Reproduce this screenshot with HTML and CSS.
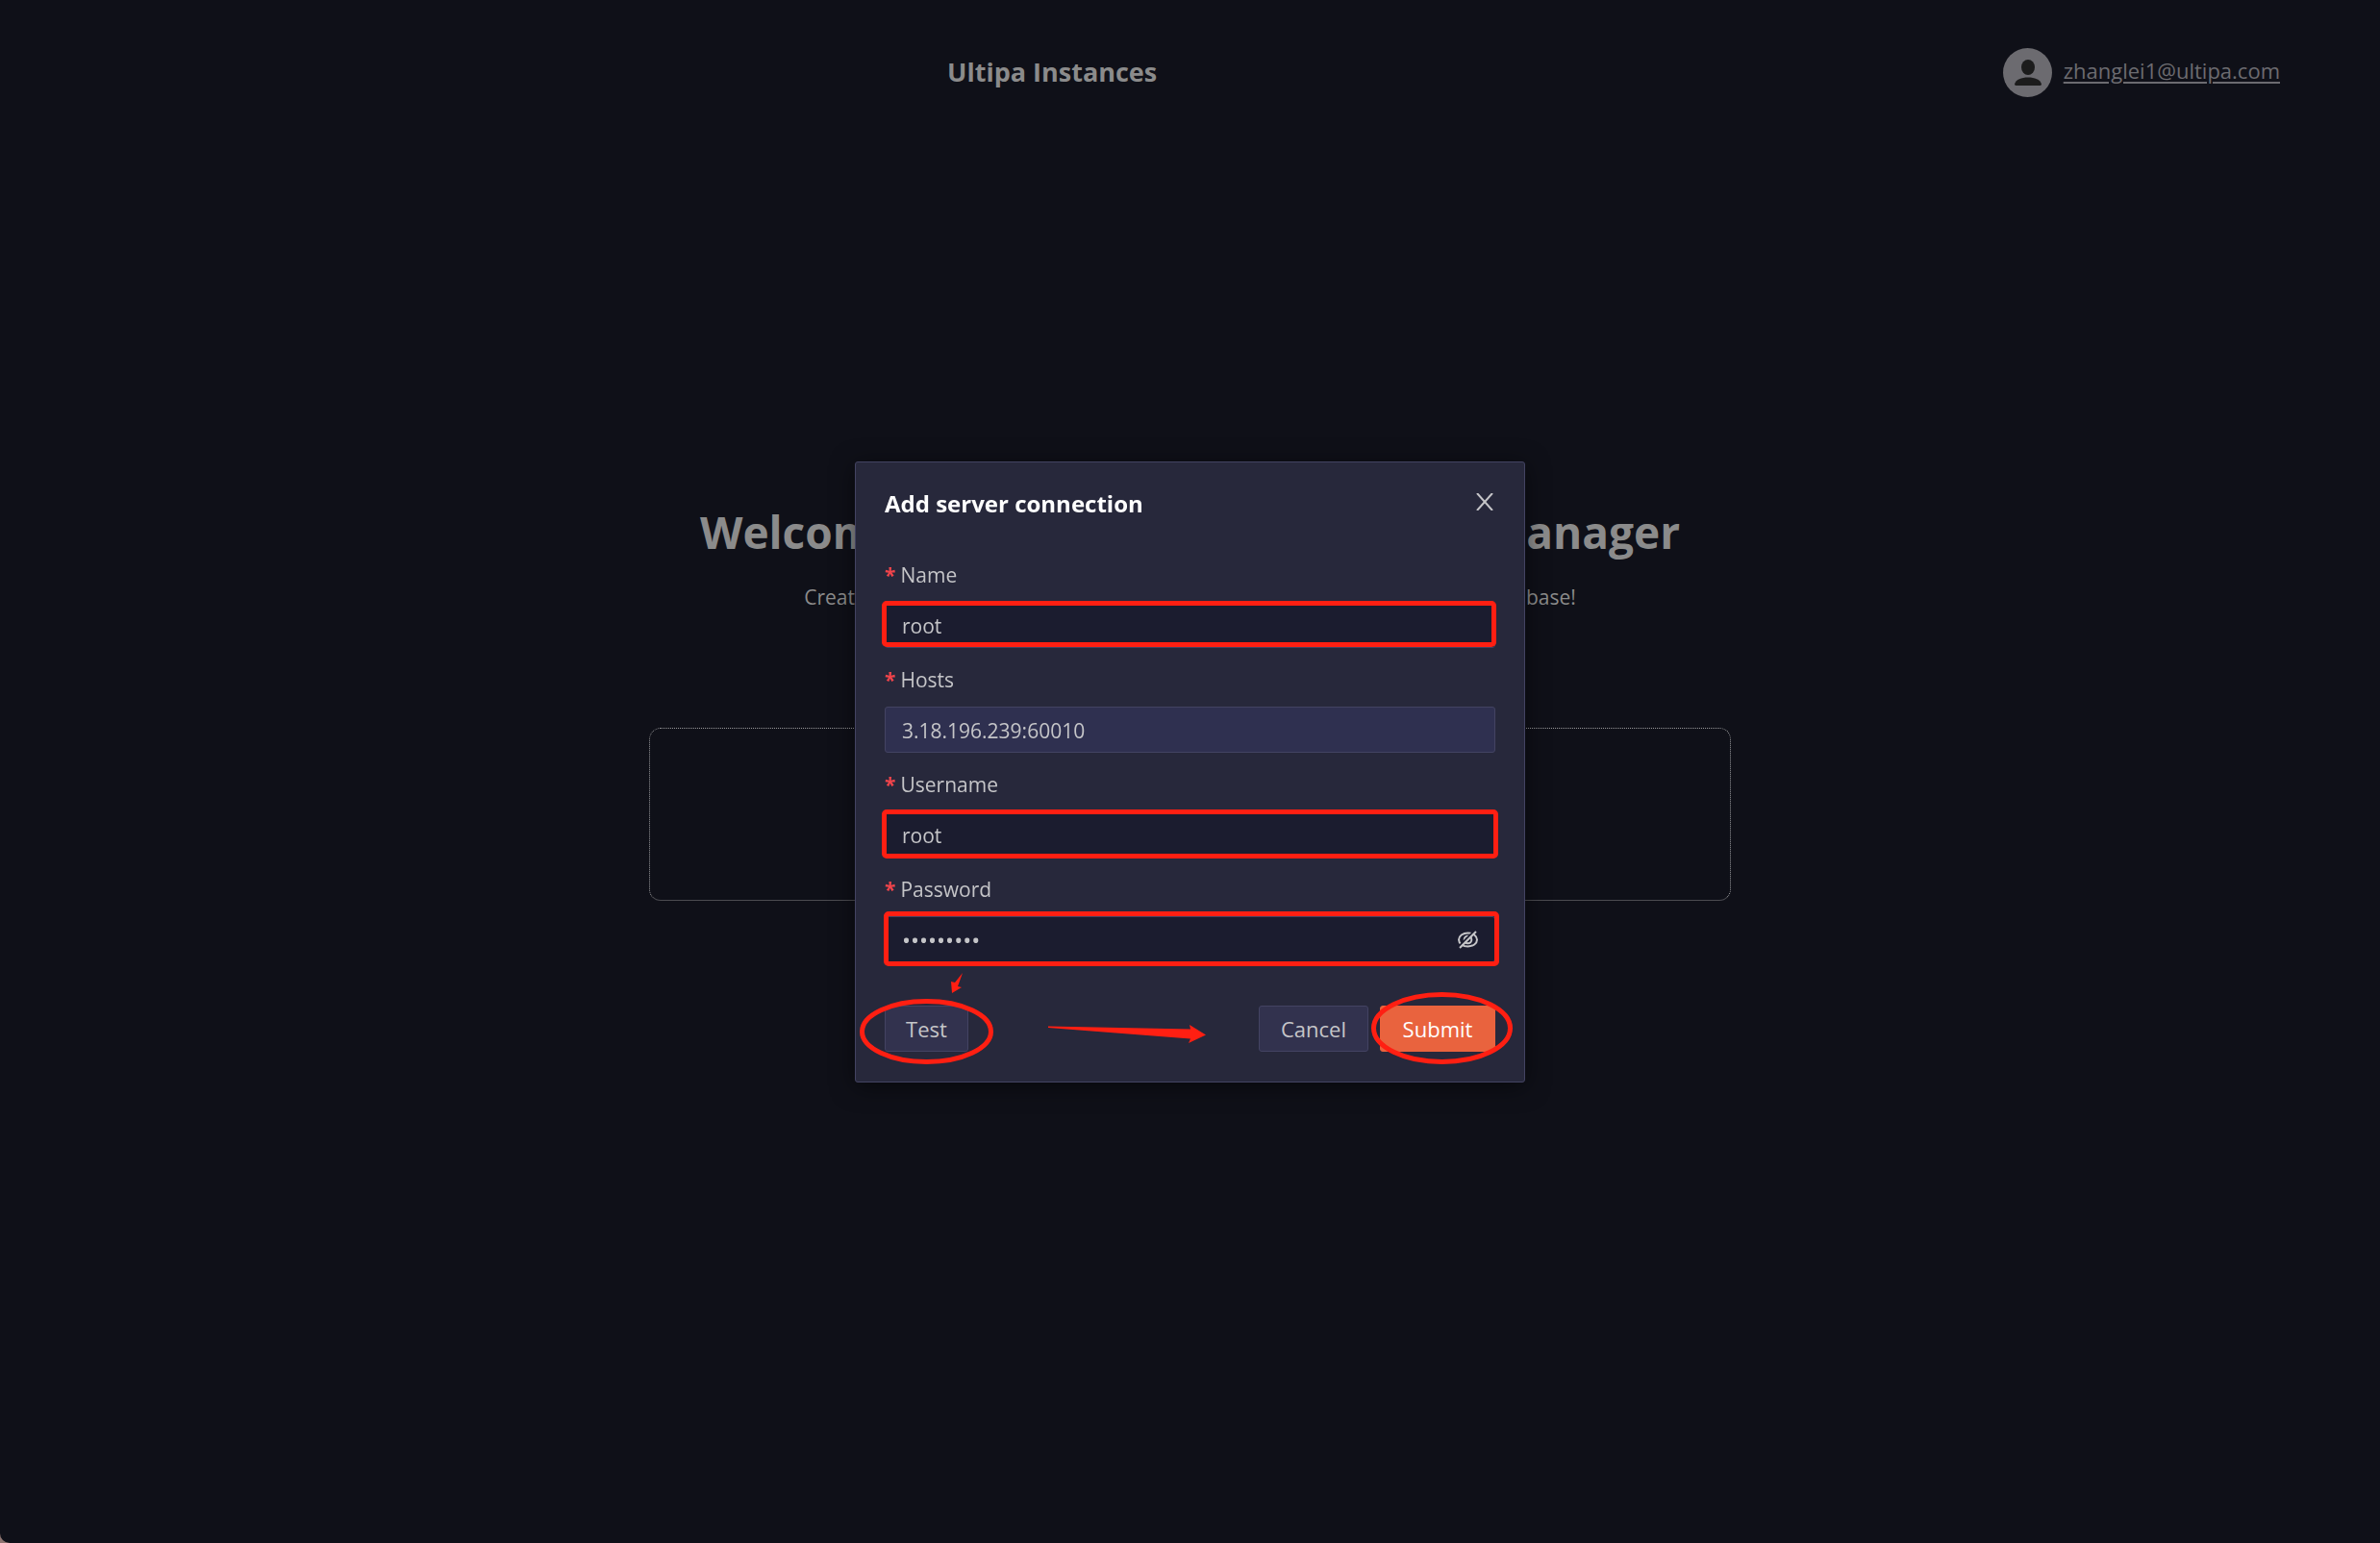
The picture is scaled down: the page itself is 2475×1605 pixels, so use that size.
FILE: index.html
```html
<!DOCTYPE html>
<html lang="en">
<head>
    <meta charset="UTF-8">
    <meta name="viewport" content="width=device-width, initial-scale=1.0">
    <title>Ultipa Instances</title>
    <link rel="stylesheet" href="styles.css">
</head>
<body>
    <div class="page">
        <header class="header">
            <h1>Ultipa Instances</h1>
            <div class="user">
                <svg class="avatar" viewBox="0 0 51 51" aria-hidden="true">
                    <circle cx="25.5" cy="25.5" r="25.5" fill="#6c6b70"/>
                    <ellipse cx="26" cy="20" rx="7" ry="8" fill="#1c1c1c"/>
                    <path d="M12 37.500C13.500 32.500 19 30.500 26 30.500S38.500 32.500 40 37.500Q40 39 37 39H15Q12 39 12 37.500Z" fill="#1c1c1c"/>
                </svg>
                <a href="#">zhanglei1@ultipa.com</a>
            </div>
        </header>

        <main class="welcome">
            <h2>Welcome to Ultipa Graph Database Manager</h2>
            <p>Create or add a server connection and then start using the Ultipa Graph database!</p>
            <div class="drop-box"></div>
        </main>
    </div>

    <div class="overlay">
        <form class="modal" role="dialog" aria-labelledby="modal-title">
            <div class="modal-header">
                <h3 id="modal-title">Add server connection</h3>
                <button type="button" class="close-button" aria-label="Close">
                    <svg viewBox="0 0 18 18"><path d="M1 0L17 18M17 0L1 18"/></svg>
                </button>
            </div>

            <div class="form-group">
                <label for="name">Name</label>
                <div class="field">
                    <input type="text" id="name" value="root">
                    <span class="mark mark-name"></span>
                </div>
            </div>
            <div class="form-group">
                <label for="hosts">Hosts</label>
                <div class="field">
                    <input type="text" id="hosts" class="filled" value="3.18.196.239:60010">
                </div>
            </div>
            <div class="form-group">
                <label for="username">Username</label>
                <div class="field">
                    <input type="text" id="username" value="root">
                    <span class="mark mark-username"></span>
                </div>
            </div>
            <div class="form-group">
                <label for="password">Password</label>
                <div class="field">
                    <input type="password" id="password" value="ultipa123">
                    <button type="button" class="eye-button" aria-label="Show password">
                        <svg viewBox="0 0 21 19">
                            <ellipse cx="10.500" cy="9.500" rx="9.500" ry="7"/>
                            <circle cx="10.500" cy="9.500" r="3.800"/>
                            <path class="gap" d="M1 16.500L18 -0.500"/>
                            <path d="M2 18L19 1"/>
                        </svg>
                    </button>
                    <span class="mark mark-password"></span>
                </div>
            </div>

            <div class="modal-footer">
                <button type="button" class="test">Test</button>
                <button type="button" class="cancel">Cancel</button>
                <button type="submit" class="primary">Submit</button>

                <!-- steps: test first, then submit -->
                <svg class="steps" viewBox="0 0 696 120" aria-hidden="true">
                    <ellipse cx="73.500" cy="67" rx="67" ry="31.500"/>
                    <ellipse cx="609.500" cy="63.500" rx="71" ry="35"/>
                    <path d="M111 6L103 16L99 15L100 27L110 21L106 20Z"/>
                    <path d="M200 61.500L348 64.500L347 60L364 70.500L346 79L348 74.500L200 63Z"/>
                </svg>
            </div>
        </form>
    </div>
</body>
</html>
```

FILE: styles.css
```css
* {
    margin: 0;
    padding: 0;
    box-sizing: border-box;
}

html {
    background: #8d7470;
}

body {
    font-family: 'Open Sans', 'Noto Sans', sans-serif;
    font-size: 21px;
    line-height: 32px;
    background: #0f1018;
    color: #8b8b8b;
    min-height: 100vh;
    border-bottom-left-radius: 10px;
}

.header {
    display: flex;
    justify-content: space-between;
    align-items: center;
    height: 150px;
    padding-left: 39.8%;
    padding-right: 104px;
}

h1 {
    font-size: 27px;
    line-height: 40px;
}

.user {
    display: flex;
    align-items: center;
    gap: 12px;
}

.avatar {
    width: 51px;
    height: 51px;
}

.user a {
    padding-bottom: 4px;
    color: #6c6b70;
    font-size: 22px;
    text-underline-offset: 3px;
}

.welcome {
    display: flex;
    flex-direction: column;
    align-items: center;
    padding-top: 368px;
}

h2 {
    font-size: 46px;
    line-height: 70px;
    white-space: nowrap;
}

.welcome p {
    margin-top: 17px;
    white-space: nowrap;
}

.drop-box {
    width: 1125px;
    max-width: 90%;
    height: 180px;
    margin-top: 120px;
    border: 1px dotted #98989a;
    border-bottom: 1px solid #4b4b50;
    border-radius: 12px;
}

.overlay {
    position: fixed;
    inset: 0;
    display: flex;
    align-items: center;
    justify-content: center;
}

.modal {
    width: 697px;
    padding: 25px 30px 31px;
    background: #27283b;
    border: 1px solid #434362;
    border-radius: 3px;
    box-shadow: 0 4px 24px rgba(0, 0, 0, 0.5);
    color: #c5c5c8;
}

.modal-header {
    display: flex;
    justify-content: space-between;
    align-items: flex-start;
    height: 75px;
}

h3 {
    font-size: 24px;
    line-height: 36px;
    color: #fff;
}

button {
    height: 48px;
    background: #32324e;
    border: 1px solid #434362;
    border-radius: 3px;
    color: #c5c5c8;
    font-family: inherit;
    font-size: 22px;
    cursor: pointer;
}

.close-button,
.eye-button {
    height: auto;
    background: none;
    border: none;
}

.close-button svg {
    display: block;
    width: 18px;
    height: 18px;
    margin: 7px 2px;
}

svg path,
svg ellipse,
svg circle {
    stroke-width: 2;
}

.close-button svg,
.eye-button svg {
    fill: none;
    stroke: #c5c5c8;
}

.form-group {
    margin-bottom: 16px;
}

label {
    display: block;
    height: 45px;
    padding-top: 1px;
}

label::before {
    content: "*";
    margin-right: 5px;
    color: #f0444b;
    font-weight: bold;
}

.field {
    position: relative;
}

input {
    display: block;
    width: 100%;
    height: 48px;
    padding: 2px 17px 0;
    background: #1b1c2f;
    border: 1px solid #434362;
    border-radius: 3px;
    outline: none;
    color: #c5c5c8;
    font-family: inherit;
    font-size: 21px;
}

input.filled {
    background: #2f3050;
}

input[type="password"] {
    font-size: 24px;
}

.eye-button {
    position: absolute;
    top: 15px;
    right: 18px;
}

.eye-button svg {
    display: block;
    width: 21px;
    height: 19px;
}

.eye-button .gap {
    stroke: #1b1c2f;
}

.mark {
    position: absolute;
    border: 5px solid #ff1f12;
    border-radius: 5px;
    pointer-events: none;
}

.mark-name {
    inset: -1px -1px 1px -3px;
}

.mark-username {
    inset: -2px -3px -1px -3px;
}

.mark-password {
    inset: -5px -4px -4px -1px;
}

.modal-footer {
    position: relative;
    display: flex;
    gap: 12px;
    margin-top: 45px;
}

.test {
    width: 87px;
}

.cancel {
    width: 114px;
    margin-left: auto;
}

.primary {
    width: 120px;
    background: #e9633e;
    border-color: #e9633e;
    color: #fff;
}

.steps {
    position: absolute;
    top: -40px;
    left: -30px;
    width: 696px;
    height: 120px;
    overflow: visible;
    fill: #ff1f12;
    pointer-events: none;
}

.steps ellipse {
    fill: none;
    stroke: #ff1f12;
    stroke-width: 5;
}
```
